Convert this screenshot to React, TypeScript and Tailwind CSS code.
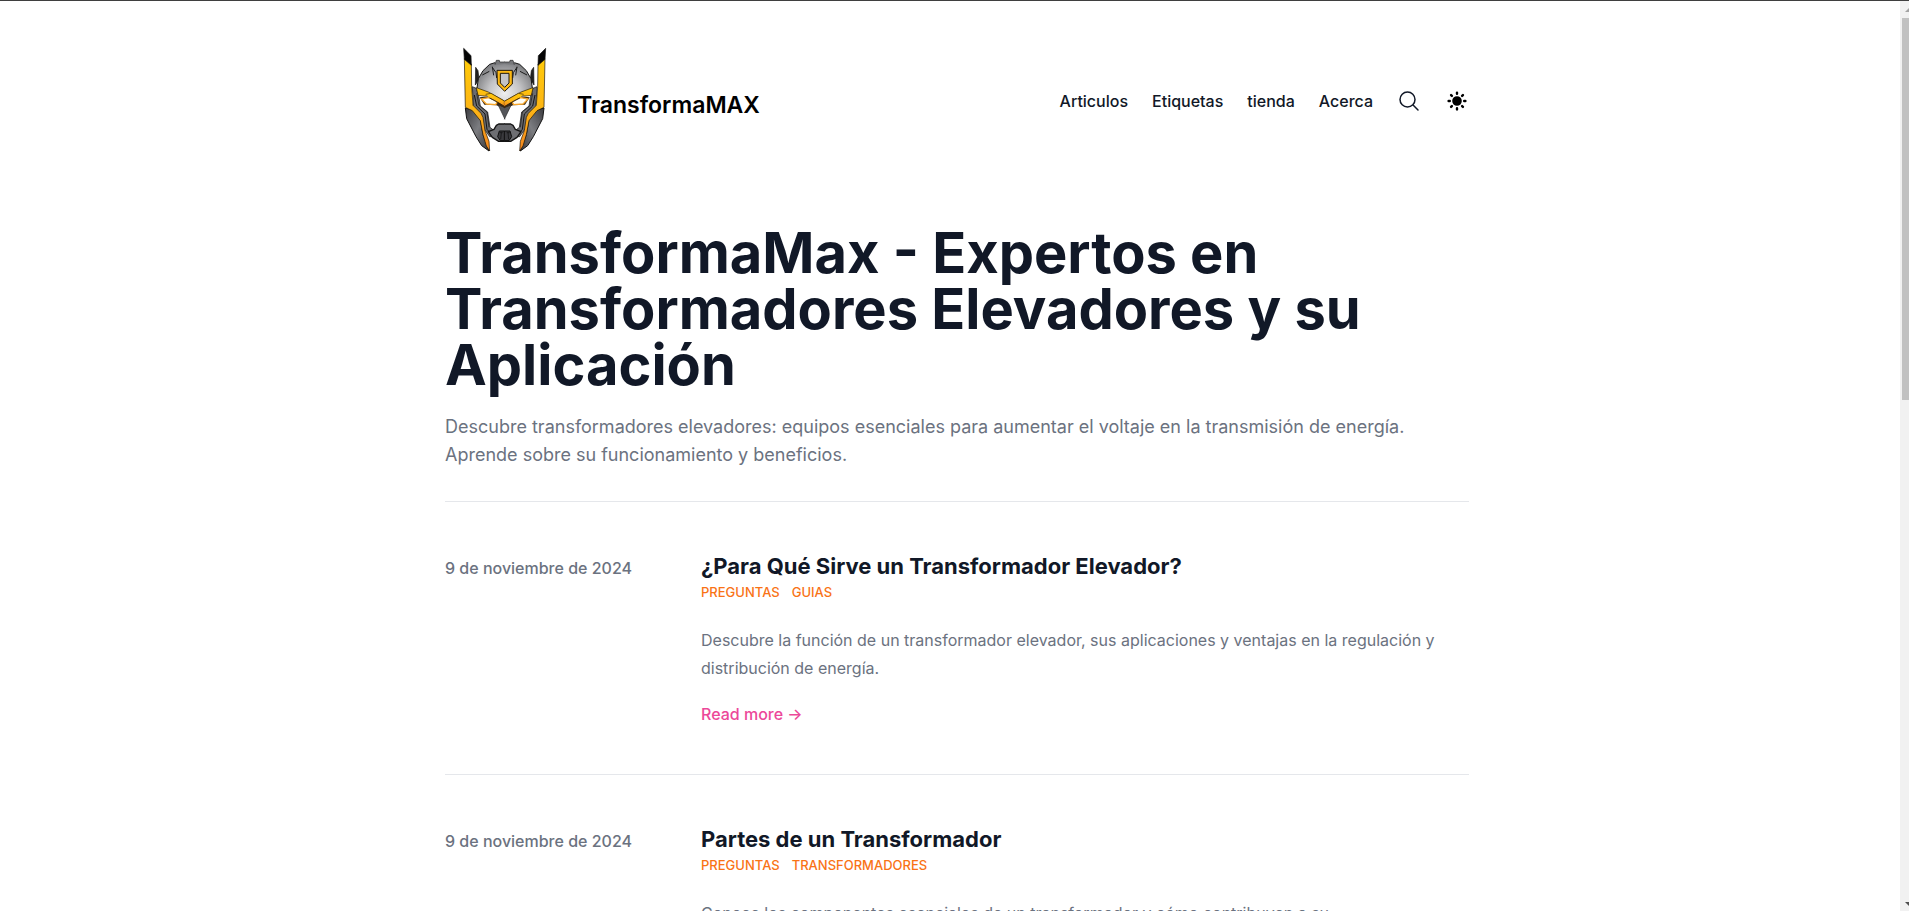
import React from "react";

type Post = {
  date: string;
  iso: string;
  title: string;
  tags: string[];
  summary: string;
};

const links = ["Articulos", "Etiquetas", "tienda", "Acerca"];

const posts: Post[] = [
  {
    date: "9 de noviembre de 2024",
    iso: "2024-11-09",
    title: "¿Para Qué Sirve un Transformador Elevador?",
    tags: ["Preguntas", "Guias"],
    summary:
      "Descubre la función de un transformador elevador, sus aplicaciones y ventajas en la regulación y distribución de energía.",
  },
  {
    date: "9 de noviembre de 2024",
    iso: "2024-11-09",
    title: "Partes de un Transformador",
    tags: ["Preguntas", "Transformadores"],
    summary:
      "Conoce los componentes esenciales de un transformador y cómo contribuyen a su funcionamiento\u00a0seguro.",
  },
];

/* One half of the helmet; the other half is its mirror image. */
function HelmetHalf() {
  return (
    <g strokeLinejoin="round">
      <path d="M62 82 L69 92 L72 118 L61 135 Z" fill="#222" stroke="#111" strokeWidth="2" />
      <path d="M52 140 L64 145 L72 172 L76 198 L98 216 L105 262 L118 272 L124 290 L104 290 L84 262 L80 232 L56 208 Z" fill="#6b6c70" stroke="#111" strokeWidth="2" />
      <path d="M58 165 L65 198 L90 222 L96 268 L114 288" fill="none" stroke="#151515" strokeWidth="3" />
      <path d="M65 160 L72 196 L96 216 L102 262" fill="none" stroke="#151515" strokeWidth="2" />
      <path d="M31 204 L52 210 L76 238 L84 284 L102 333 L80 317 L63 290 L35 236 Z" fill="url(#steel)" stroke="#141414" strokeWidth="3" />
      <path d="M28 56 L49 72 L50 140 L54 196 L78 220 L84 232 L90 272 L102 304 L104 333 L94 318 L84 284 L76 242 L52 212 L31 202 Z" fill="url(#gold)" stroke="#191308" strokeWidth="2" />
      <path d="M26 25 L48 47 L49 76 L28 58 Z" fill="#050505" stroke="#111" strokeWidth="2" />
      <path d="M120 68 L104 73 L84 92 L70 116 L66 144 L96 164 L150 190 L150 68 Z" fill="url(#dome)" />
      <path d="M120 68 L104 73 L84 92 L70 116 L66 144" fill="none" stroke="#161616" strokeWidth="3" />
      <path d="M120 74 L124 61 L133 61 L134 66 L150 66 L150 72 Z" fill="#77787b" />
      <path d="M120 74 L124 61 L133 61 L134 66 L150 66" fill="none" stroke="#222" strokeWidth="2" />
      <path d="M112 82 L123 98 L125 114 M82 105 L103 94 M112 80 L116 106" fill="none" stroke="#1c1c1c" strokeWidth="3" />
      <path d="M64 143 L100 156 L150 184 L150 194 L108 166 L88 168 L69 166 Z" fill="url(#gold)" stroke="#241804" strokeWidth="2" />
      <path d="M74 172 L108 168 L150 194 L150 206 L138 202 L124 196 L88 194 Z" fill="#3a2a18" />
      <path d="M79 177 L100 173 L129 182 L122 194 L94 192 Z" fill="#fffdf4" stroke="#f6a52a" strokeWidth="4" />
      <path d="M92 163 L108 160 L150 184 L150 200 L122 183 L104 174 Z" fill="url(#gold)" />
      <path d="M92 163 L108 160 L150 184 M150 200 L122 183 L104 174 Z" fill="none" stroke="#30200a" strokeWidth="2" />
      <path d="M130 196 L150 205 L150 238 Z" fill="#55565a" />
      <path d="M130 196 L150 238" fill="none" stroke="#242424" strokeWidth="2" />
      <path d="M124 256 L131 252 L150 252 L150 304 L131 304 L112 292 L100 275 L117 268 Z" fill="#6d6e72" />
      <path d="M150 252 L131 252 L124 256 L117 268 L100 275 L112 292 L131 304 L150 304" fill="none" stroke="#141414" strokeWidth="4" />
      <path d="M150 273 H133 L128 290 L136 302 H150 Z" fill="#3a3a3e" stroke="#0d0d0d" strokeWidth="3" />
      <path d="M139 278 L137 298 M134 278 L143 278" stroke="#0b0b0b" strokeWidth="2" />
    </g>
  );
}

function Logo() {
  return (
    <svg viewBox="-30 3 360 360" className="mr-3 size-[120px] shrink-0" aria-hidden="true">
      <defs>
        <linearGradient id="gold" x1="0" y1="0" x2="0" y2="1">
          <stop offset="0" stopColor="#ffca08" />
          <stop offset="0.55" stopColor="#fdb515" />
          <stop offset="1" stopColor="#f5861f" />
        </linearGradient>
        <linearGradient id="steel" x1="0" y1="0" x2="1" y2="1">
          <stop offset="0" stopColor="#3c3c40" />
          <stop offset="0.5" stopColor="#7c7d81" />
          <stop offset="1" stopColor="#37373a" />
        </linearGradient>
        <radialGradient id="dome" gradientUnits="userSpaceOnUse" cx="149" cy="160" r="98">
          <stop offset="0" stopColor="#efeff0" />
          <stop offset="0.5" stopColor="#c3c3c5" />
          <stop offset="1" stopColor="#77787b" />
        </radialGradient>
      </defs>
      <HelmetHalf />
      <g transform="matrix(-1 0 0 1 298 0)">
        <HelmetHalf />
      </g>
      <path d="M126 91 H172 V132 L149 154 L127 132 Z" fill="#fdb913" stroke="#20180a" strokeWidth="3" />
      <path d="M136 100 H162 V129 L149 142 L136 129 Z" fill="#c4c4c6" stroke="#20180a" strokeWidth="3" />
    </svg>
  );
}

function SearchIcon() {
  return (
    <svg viewBox="0 0 24 24" fill="none" stroke="currentColor" strokeWidth="1.5" className="size-6" aria-hidden="true">
      <path
        strokeLinecap="round"
        strokeLinejoin="round"
        d="M21 21l-5.197-5.197m0 0A7.5 7.5 0 105.196 5.196a7.5 7.5 0 0010.607 10.607z"
      />
    </svg>
  );
}

function SunIcon() {
  return (
    <svg viewBox="0 0 20 20" fill="currentColor" className="size-6" aria-hidden="true">
      <path
        fillRule="evenodd"
        clipRule="evenodd"
        d="M10 2a1 1 0 011 1v1a1 1 0 11-2 0V3a1 1 0 011-1zm4 8a4 4 0 11-8 0 4 4 0 018 0zm-.464 4.95l.707.707a1 1 0 001.414-1.414l-.707-.707a1 1 0 00-1.414 1.414zm2.12-10.607a1 1 0 010 1.414l-.706.707a1 1 0 11-1.414-1.414l.707-.707a1 1 0 011.414 0zM17 11a1 1 0 100-2h-1a1 1 0 100 2h1zm-7 4a1 1 0 011 1v1a1 1 0 11-2 0v-1a1 1 0 011-1zM5.05 6.464A1 1 0 106.465 5.05l-.708-.707a1 1 0 00-1.414 1.414l.707.707zm1.414 8.486l-.707.707a1 1 0 01-1.414-1.414l.707-.707a1 1 0 011.414 1.414zM4 11a1 1 0 100-2H3a1 1 0 000 2h1z"
      />
    </svg>
  );
}

function Header() {
  return (
    <header className="flex items-center justify-between py-10">
      <a href="#" className="flex items-center">
        <Logo />
        <span className="pt-2 text-[23px] leading-8 font-semibold text-black">TransformaMAX</span>
      </a>
      <nav className="flex items-center gap-6 text-base font-medium text-[#111827]">
        {links.map((label) => (
          <a key={label} href="#">
            {label}
          </a>
        ))}
        <button type="button" aria-label="Buscar">
          <SearchIcon />
        </button>
        <button type="button" aria-label="Cambiar tema" className="text-black">
          <SunIcon />
        </button>
      </nav>
    </header>
  );
}

function PostItem({ post }: { post: Post }) {
  return (
    <li className="py-12">
      <article className="grid grid-cols-4 items-baseline">
        <time dateTime={post.iso} className="text-base font-medium text-[#6b7280]">
          {post.date}
        </time>
        <div className="col-span-3">
          <h2 className="text-[22px] leading-8 font-bold text-[#111827]">
            <a href="#">{post.title}</a>
          </h2>
          <div className="flex flex-wrap gap-3 text-[13px] leading-5 font-medium text-[#f97316] uppercase">
            {post.tags.map((tag) => (
              <a key={tag} href="#">
                {tag}
              </a>
            ))}
          </div>
          <p className="mt-6 text-base leading-7 text-[#6b7280]">{post.summary}</p>
          <a href="#" className="mt-5 block w-fit text-base leading-6 font-medium text-[#ec4899]">
            Read more →
          </a>
        </div>
      </article>
    </li>
  );
}

function Scrollbar() {
  return (
    <div className="flex w-[9px] shrink-0 flex-col overflow-hidden bg-[#f1f1f1] pl-0.5" aria-hidden="true">
      <svg viewBox="0 0 7 17" className="h-[17px] w-[7px] shrink-0">
        <path d="M3 11 L7 7 V11 Z" fill="#a3a3a3" />
      </svg>
      <div className="h-[42%] bg-[#c1c1c1]" />
      <svg viewBox="0 0 7 17" className="mt-auto h-[17px] w-[7px] shrink-0">
        <path d="M3 8 H7 V12 Z" fill="#505050" />
      </svg>
    </div>
  );
}

export default function App() {
  return (
    <div className="flex h-screen border-t border-[#3f3f3f] bg-white font-['Inter','Noto_Sans',sans-serif] antialiased">
      <div className="min-w-0 flex-1 overflow-hidden pl-3.5">
        <div className="mx-auto max-w-5xl">
          <Header />
          <main className="divide-y divide-[#e5e7eb]">
            <div className="space-y-5 pt-6 pb-8">
              <h1 className="text-[56px] leading-14 font-bold text-[#111827]">
                TransformaMax - Expertos en Transformadores Elevadores y su Aplicación
              </h1>
              <p className="text-lg leading-7 text-[#6b7280]">
                Descubre transformadores elevadores: equipos esenciales para aumentar el voltaje en la transmisión de
                energía. Aprende sobre su funcionamiento y beneficios.
              </p>
            </div>
            <ul className="divide-y divide-[#e5e7eb]">
              {posts.map((post) => (
                <PostItem key={post.title} post={post} />
              ))}
            </ul>
          </main>
        </div>
      </div>
      <Scrollbar />
    </div>
  );
}
